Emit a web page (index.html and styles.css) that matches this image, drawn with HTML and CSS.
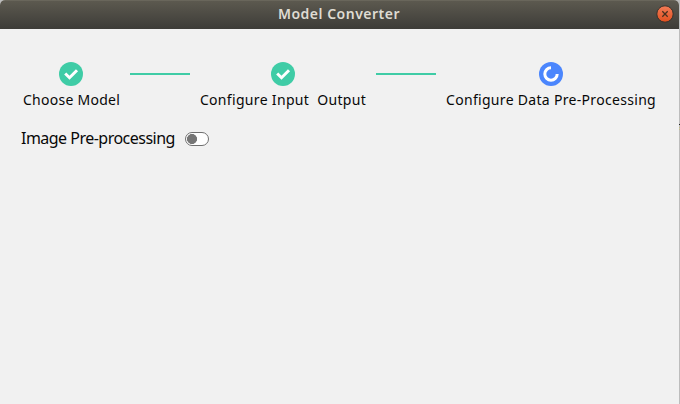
FILE: index.html
```
<!DOCTYPE html>
<html lang="en">
<head>
<meta charset="utf-8">
<title>Model Converter</title>
<link rel="stylesheet" href="styles.css">
</head>
<body>
<div class="window">
  <header class="titlebar">
    <h1 class="title">Model Converter</h1>
    <button class="close" aria-label="Close">
      <svg width="18" height="18" viewBox="0 0 18 18"><defs><linearGradient id="g" x2="0" y2="1"><stop stop-color="#f37c57"/><stop offset="1" stop-color="#e1501f"/></linearGradient></defs><circle cx="9" cy="9" r="8.2" fill="url(#g)" stroke="#35322d" stroke-width="1"/><path d="M6.3 6.3l5.4 5.4M11.7 6.3l-5.4 5.4" stroke="#48301f" stroke-width="1.3"/></svg>
    </button>
  </header>
  <main class="content">
    <div class="steps">
      <div class="step choose">
        <svg class="icon" viewBox="0 0 24 24"><circle cx="12" cy="12" r="12" fill="#3fcca6"/><path d="M6.2 11.5l4.3 4.2 7.5-7.5" fill="none" stroke="#fff" stroke-width="3"/></svg>
        <span class="label">Choose Model</span>
      </div>
      <div class="line"></div>
      <div class="step configure">
        <svg class="icon" viewBox="0 0 24 24"><circle cx="12" cy="12" r="12" fill="#3fcca6"/><path d="M6.2 11.5l4.3 4.2 7.5-7.5" fill="none" stroke="#fff" stroke-width="3"/></svg>
        <span class="label">Configure Input&nbsp; Output</span>
      </div>
      <div class="line"></div>
      <div class="step process">
        <svg class="icon" viewBox="0 0 24 24"><circle cx="12" cy="12" r="12" fill="#4b86fd"/><path d="M12 5.8A6.2 6.2 0 1 0 18.2 12" fill="none" stroke="#fff" stroke-width="3"/></svg>
        <span class="label">Configure Data Pre-Processing</span>
      </div>
    </div>
    <div class="option">
      <span class="option-label">Image Pre-processing</span>
      <span class="switch" role="switch" aria-checked="false"></span>
    </div>
  </main>
</div>
<div class="backdrop-mark"></div>
</body>
</html>
```
FILE: styles.css
```
body {
  display: flex;
  margin: 0;
  background: #bdbdbd;
  font-family: "Noto Sans", "Open Sans", sans-serif;
  color: #080808;
}
.window {
  box-sizing: border-box;
  flex: none;
  width: 679px;
  height: 404px;
  overflow: hidden;
  border-radius: 5px 5px 0 0;
  background: #f1f1f1;
}
.backdrop-mark {
  width: 1px;
  height: 1px;
  margin-top: 124px;
  background: #222;
  box-shadow: 0 3px #c5bd85, 0 5px #c5bd85;
}
.titlebar {
  display: grid;
  grid-template-columns: 1fr auto 1fr;
  align-items: start;
  box-sizing: border-box;
  height: 29px;
  padding: 0 5px 0 4px;
  background: linear-gradient(#5c594f, #3d3c38);
  border-top: 1px solid #69665b;
}
.title {
  grid-column: 2;
  margin: 0;
  font-size: 14px;
  line-height: 26px;
  font-weight: 600;
  color: #dfdbd2;
  letter-spacing: 0.5px;
  white-space: nowrap;
}
.close {
  justify-self: end;
  width: 18px;
  height: 18px;
  margin-top: 4px;
  padding: 0;
  border: 0;
  background: none;
}
.close svg, .icon { display: block; }
.content { padding: 33px 0 0 21px; }
.steps {
  display: flex;
  gap: 10px;
  padding-left: 2px;
}
.step {
  display: flex;
  flex: none;
  flex-direction: column;
  align-items: center;
}
.choose { width: 97px; letter-spacing: 0.27px; }
.configure { width: 166px; letter-spacing: 0.33px; }
.process { width: 210px; letter-spacing: 0.31px; }
.icon { width: 24px; height: 24px; }
.choose .icon { margin-right: 1px; }
.label {
  margin-top: 4px;
  font-size: 14px;
  line-height: 20px;
  white-space: nowrap;
}
.line {
  flex: none;
  width: 60px;
  height: 2px;
  margin-top: 11px;
  background: #3fcca6;
}
.option {
  display: flex;
  align-items: center;
  gap: 10px;
  margin-top: 16px;
}
.option-label {
  width: 154px;
  font-size: 16px;
  line-height: 24px;
  white-space: nowrap;
  letter-spacing: -0.52px;
}
.switch {
  box-sizing: border-box;
  width: 24px;
  height: 14px;
  margin-top: 1px;
  border: 1px solid #707070;
  border-radius: 7px;
  background: radial-gradient(circle at 6px 6px, #767676 4.7px, transparent 5.3px) #fff;
}
```
